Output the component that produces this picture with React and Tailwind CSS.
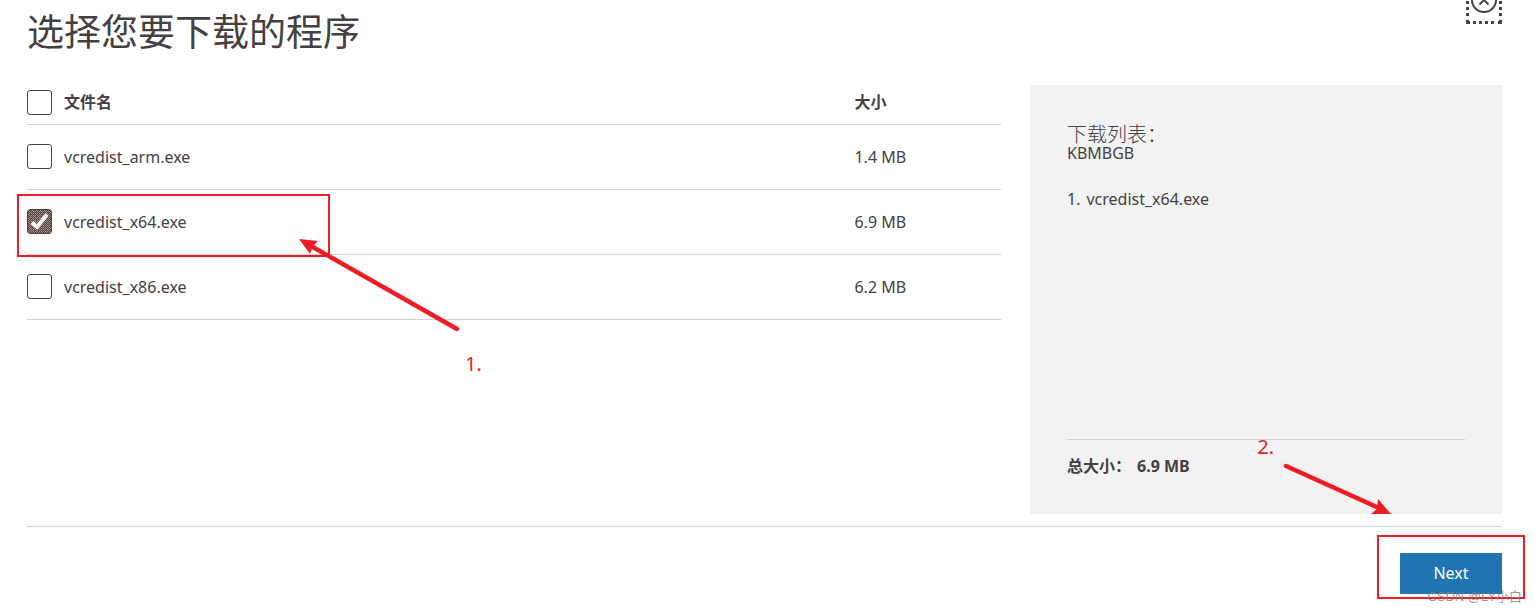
import { useState } from 'react';

const FILES = [
  { name: 'vcredist_arm.exe', size: '1.4 MB' },
  { name: 'vcredist_x64.exe', size: '6.9 MB' },
  { name: 'vcredist_x86.exe', size: '6.2 MB' },
];

function CheckBox({ id, checked, onChange }) {
  return (
    <span className="relative block w-[25px] h-[25px] flex-shrink-0">
      <input
        id={id}
        type="checkbox"
        checked={checked}
        onChange={onChange}
        className="block w-full h-full appearance-none rounded-[3px] border border-[#4c4245] bg-white"
      />
      {checked && (
        <svg className="absolute inset-0 pointer-events-none" width="25" height="25" viewBox="0 0 25 25">
          <defs>
            <pattern id="dots" width="4" height="4" patternUnits="userSpaceOnUse" shapeRendering="crispEdges">
              <rect width="4" height="4" fill="#4c4245" />
              <rect x="0" y="0" width="1" height="1" fill="#e09a5c" />
              <rect x="2" y="0" width="1" height="1" fill="#c98a5c" />
              <rect x="1" y="1" width="1" height="1" fill="#c98a5c" />
              <rect x="3" y="1" width="1" height="1" fill="#3f7aa8" />
              <rect x="0" y="2" width="1" height="1" fill="#c98a5c" />
              <rect x="2" y="2" width="1" height="1" fill="#e09a5c" />
              <rect x="1" y="3" width="1" height="1" fill="#7d6a66" />
              <rect x="3" y="3" width="1" height="1" fill="#c98a5c" />
            </pattern>
          </defs>
          <rect x="1" y="1" width="23" height="23" fill="url(#dots)" />
          <path d="M5 13.500l5 4.500L20 5.500" fill="none" stroke="#fff" strokeWidth="3.800" />
        </svg>
      )}
    </span>
  );
}

export default function App() {
  const [selected, setSelected] = useState(['vcredist_x64.exe']);

  const toggle = (name) => {
    setSelected(selected.includes(name) ? selected.filter((n) => n !== name) : [...selected, name]);
  };

  const allChecked = selected.length === FILES.length;
  const chosen = FILES.filter((f) => selected.includes(f.name));
  const total = chosen.reduce((sum, f) => sum + parseFloat(f.size), 0).toFixed(1);

  return (
    <div className="relative overflow-hidden bg-white pl-[27px] pr-[33px] pt-[6px] pb-[19px] text-base text-[#454142] font-['Noto_Sans','Noto_Sans_CJK_SC',sans-serif]">
      <button
        aria-label="关闭"
        className="absolute -top-6 right-[33px] w-9 h-12 flex items-center justify-center border-3 border-dotted border-[#4c4245]"
      >
        <svg className="flex-shrink-0" width="28" height="28" viewBox="0 0 28 28" fill="none" stroke="#4c4245" strokeWidth="2">
          <circle cx="14" cy="14" r="12" />
          <path d="M9.500 9.500l9 9M18.500 9.500l-9 9" />
        </svg>
      </button>

      <h1 className="text-[37px] leading-[48px] font-['Noto_Sans_CJK_SC',sans-serif]">选择您要下载的程序</h1>

      <div className="mt-[31px] flex justify-between">
        <div className="relative w-[66%]">
          <table className="w-full table-fixed border-collapse text-left">
            <thead>
              <tr className="h-[39px] border-b border-[#d2d2d2]">
                <th className="w-[85%] p-0 pb-1">
                  <label htmlFor="all" className="flex items-center gap-3 leading-5">
                    <CheckBox
                      id="all"
                      checked={allChecked}
                      onChange={() => setSelected(allChecked ? [] : FILES.map((f) => f.name))}
                    />
                    文件名
                  </label>
                </th>
                <th className="p-0 pb-1 leading-5">大小</th>
              </tr>
            </thead>
            <tbody>
              {FILES.map((f) => (
                <tr key={f.name} className="h-[65px] border-b border-[#d2d2d2]">
                  <td className="p-0">
                    <label htmlFor={f.name} className="flex items-center gap-3">
                      <CheckBox id={f.name} checked={selected.includes(f.name)} onChange={() => toggle(f.name)} />
                      {f.name}
                    </label>
                  </td>
                  <td className="p-0">{f.size}</td>
                </tr>
              ))}
            </tbody>
          </table>

          {/* first step: box, arrow and number */}
          <div className="absolute -left-[10px] top-[109px] w-[313px] h-[63px] border-2 border-[#ee1c25] pointer-events-none" />
          <svg
            className="absolute left-[272px] top-[153px] pointer-events-none"
            width="164"
            height="96"
            viewBox="0 0 164 96"
            fill="#ee1c25"
          >
            <path d="M12 8L158 91" stroke="#ee1c25" strokeWidth="4.500" strokeLinecap="round" />
            <path d="M0 1l19 2-5 5-3 8z" />
          </svg>
          <span className="absolute left-[438px] top-[265px] text-xl leading-7 text-[#ee1c25]">1.</span>
        </div>

        <aside className="relative w-[32%] min-h-[429px] flex flex-col bg-[#f2f2f2] px-[37px] pt-[38px]">
          <h2 className="text-xl leading-[22px] font-['Noto_Sans_CJK_SC',sans-serif] font-light">下载列表：</h2>
          <p className="leading-4">KBMBGB</p>
          <ol className="mt-[26px]">
            {chosen.map((f, i) => (
              <li key={f.name} className="flex gap-[6px]">
                <span>{i + 1}.</span>
                {f.name}
              </li>
            ))}
          </ol>
          <div className="mt-auto h-[75px] border-t border-[#d2d2d2] pt-[14px] font-bold flex gap-[6px]">
            <span>总大小：</span>
            <span>{total} MB</span>
          </div>

          {/* second step: number and arrow */}
          <span className="absolute right-[228px] bottom-[53px] text-xl leading-7 text-[#ee1c25]">2.</span>
          <svg
            className="absolute right-[111px] bottom-0 pointer-events-none"
            width="110"
            height="52"
            viewBox="0 0 110 52"
            fill="#ee1c25"
          >
            <path d="M5 4L98 46" stroke="#ee1c25" strokeWidth="4.500" strokeLinecap="round" />
            <path d="M97 37l13 15H90l6-5z" />
          </svg>
        </aside>
      </div>

      <div className="mt-3 border-t border-[#d2d2d2] pt-[26px] flex justify-end">
        <div className="relative">
          <button className="block w-[102px] h-[41px] pb-[2px] bg-[#1f74b1] text-white">Next</button>
          <div className="absolute -left-[23px] -top-[18px] w-[148px] h-[64px] border-2 border-[#ee1c25] pointer-events-none" />
          <span className="absolute -right-5 top-[34px] whitespace-nowrap text-[13px] leading-5 text-[#7d7d7d]/80 font-['Liberation_Sans','Noto_Sans_CJK_SC',sans-serif]">
            CSDN @LY小白
          </span>
        </div>
      </div>
    </div>
  );
}
